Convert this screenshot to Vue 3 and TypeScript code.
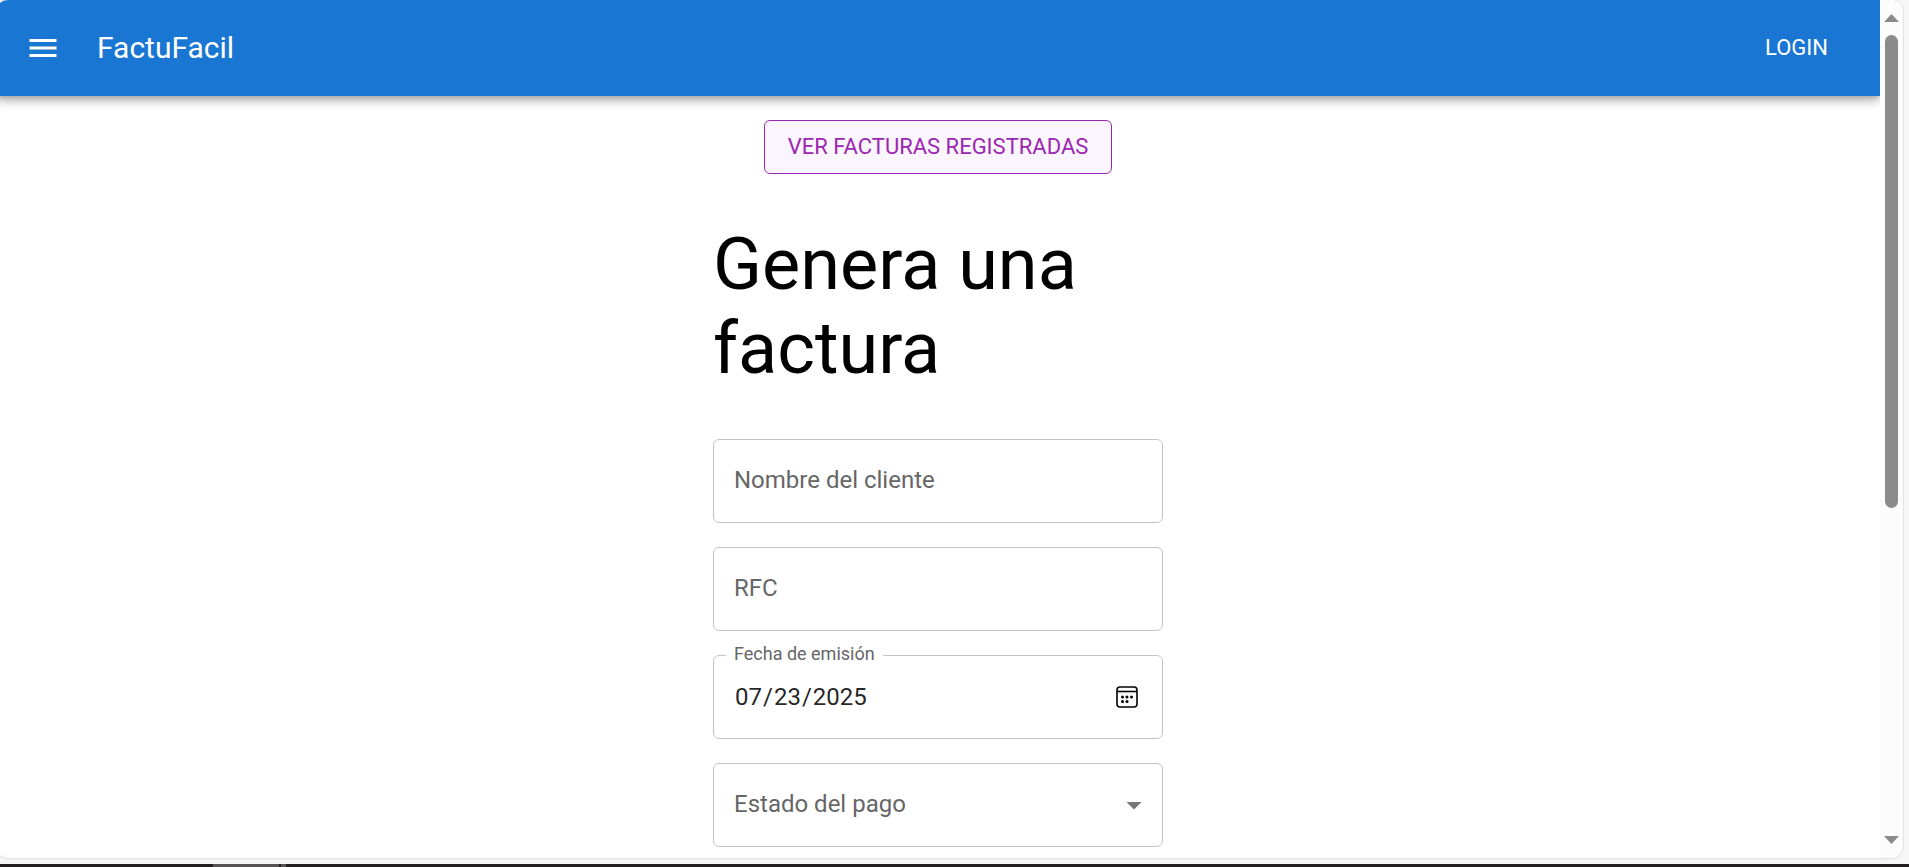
<script setup lang="ts">
import { ref } from 'vue'

const clientName = ref('')
const rfc = ref('')
const issueDate = ref('2025-07-23')
const paymentStatus = ref('')
const statuses: string[] = ['Pagado', 'Pendiente']
</script>

<template>
  <div class="desktop">
    <div class="window">
      <div class="page">
        <header class="appbar">
          <button class="menu" type="button" aria-label="Menu">
            <svg viewBox="0 0 24 24" aria-hidden="true">
              <path d="M3 18h18v-2H3zm0-5h18v-2H3zm0-7v2h18V6z" />
            </svg>
          </button>
          <div class="brand">FactuFacil</div>
          <button class="login" type="button">LOGIN</button>
        </header>

        <main class="content">
          <button class="outlined" type="button">VER FACTURAS REGISTRADAS</button>
          <form class="form" @submit.prevent>
            <h1>Genera una factura</h1>
            <div class="field">
              <input id="client" v-model="clientName" type="text" />
              <label v-show="!clientName" for="client">Nombre del cliente</label>
            </div>
            <div class="field">
              <input id="rfc" v-model="rfc" type="text" />
              <label v-show="!rfc" for="rfc">RFC</label>
            </div>
            <div class="field">
              <input id="date" v-model="issueDate" type="date" />
              <label class="floating" for="date">Fecha de emisión</label>
              <svg class="calendar" viewBox="0 0 22 22" aria-hidden="true">
                <rect x="1" y="1" width="20" height="20" rx="3" fill="none" stroke="#000" stroke-width="1.6" />
                <path d="M1 5.5h20" stroke="#000" stroke-width="1.6" />
                <circle cx="6.5" cy="11" r="1.5" />
                <circle cx="11" cy="11" r="1.5" />
                <circle cx="15.5" cy="11" r="1.5" />
                <circle cx="6.5" cy="15.5" r="1.5" />
                <circle cx="11" cy="15.5" r="1.5" />
              </svg>
            </div>
            <div class="field">
              <select id="status" v-model="paymentStatus">
                <option value=""></option>
                <option v-for="s in statuses" :key="s" :value="s">{{ s }}</option>
              </select>
              <label v-show="!paymentStatus" for="status">Estado del pago</label>
              <svg class="arrow" viewBox="0 0 24 24" aria-hidden="true"><path d="m7 10 5 5 5-5z" /></svg>
            </div>
          </form>
        </main>
      </div>

      <div class="scrollbar" aria-hidden="true">
        <svg viewBox="0 0 15 8"><path d="M7.500 0 15 8H0z" /></svg>
        <div class="track"><div class="thumb"></div></div>
        <svg viewBox="0 0 15 8"><path d="M0 0h15L7.500 8z" /></svg>
      </div>
    </div>
    <div class="taskbar" aria-hidden="true">
      <span class="task"></span>
      <span class="task small"></span>
    </div>
  </div>
</template>

<style>
body {
  margin: 0;
  background: #f6f6f6;
}
</style>

<style scoped>
.desktop {
  box-sizing: border-box;
  height: 100vh;
  display: flex;
  flex-direction: column;
  gap: 6px;
  overflow: hidden;
  background: #f6f6f6;
  font-family: Roboto, "Liberation Sans", sans-serif;
}

button,
input,
select {
  font: inherit;
  margin: 0;
}

.window {
  flex: 1;
  min-height: 0;
  display: flex;
  margin: 0 6px 0 -4px;
  overflow: hidden;
  background: #fff;
  border-radius: 12px;
  box-shadow: 0 0 0 1px #e4e4e4, 0 1px 2px #e0e0e0;
}

.page {
  flex: 1;
  min-width: 0;
  overflow: hidden;
}

.appbar {
  box-sizing: border-box;
  height: 96px;
  display: flex;
  align-items: center;
  padding: 0 36px 0 17px;
  background: #1976d2;
  color: #fff;
  box-shadow: 0 3px 6px -1px rgba(0, 0, 0, 0.2), 0 6px 8px rgba(0, 0, 0, 0.14), 0 2px 15px rgba(0, 0, 0, 0.12);
}

.menu {
  display: flex;
  padding: 12px;
  margin-right: 24px;
  border: 0;
  background: none;
  color: inherit;
}

.menu svg {
  width: 36px;
  height: 36px;
  fill: currentColor;
}

.brand {
  flex: 1;
  font-size: 30px;
  font-weight: 400;
  line-height: 48px;
}

.login {
  padding: 9px 16px;
  border: 0;
  background: none;
  color: inherit;
  font-size: 22px;
  font-weight: 400;
  line-height: 36px;
}

.content {
  display: flex;
  flex-direction: column;
  align-items: center;
  gap: 49px;
  padding: 24px 0;
}

.outlined {
  padding: 8px 23px;
  border: 1px solid #9c27b0;
  border-radius: 6px;
  background: #fbf6fd;
  color: #9c27b0;
  font-size: 22px;
  font-weight: 400;
  line-height: 36px;
}

.form {
  width: 450px;
  display: flex;
  flex-direction: column;
  gap: 24px;
}

h1 {
  margin: 0 0 24px;
  color: #000;
  font-size: 72px;
  font-weight: 400;
  line-height: 84px;
}

.field {
  display: grid;
  align-items: center;
  font-size: 24px;
}

.field > * {
  grid-area: 1 / 1;
}

.field input,
.field select {
  box-sizing: border-box;
  width: 100%;
  height: 84px;
  padding: 0 20px;
  border: 1px solid #c4c4c4;
  border-radius: 6px;
  outline: 0;
  background: #fff;
  color: rgba(0, 0, 0, 0.87);
  appearance: none;
}

.field input::-webkit-calendar-picker-indicator {
  opacity: 0;
}

.field label {
  justify-self: start;
  margin-left: 21px;
  padding-bottom: 2px;
  color: #666;
  line-height: 36px;
  pointer-events: none;
}

.field .floating {
  align-self: start;
  margin: -12px 0 0 13px;
  padding: 0 8px;
  background: #fff;
  font-size: 18px;
  line-height: 21px;
}

.field svg {
  justify-self: end;
  pointer-events: none;
}

.calendar {
  width: 22px;
  height: 22px;
  margin-right: 25px;
}

.arrow {
  width: 36px;
  height: 36px;
  margin-right: 11px;
  fill: #757575;
}

.scrollbar {
  box-sizing: border-box;
  width: 23px;
  display: flex;
  flex-direction: column;
  align-items: center;
  gap: 13px;
  padding: 14px 0;
  background: #fcfcfc;
}

.scrollbar svg {
  width: 15px;
  height: 8px;
  fill: #8b8b8b;
}

.track {
  flex: 1;
}

.thumb {
  width: 13px;
  height: 60%;
  border-radius: 7px;
  background: #8b8b8b;
}

.taskbar {
  flex: none;
  height: 3px;
  display: flex;
  gap: 2px;
  padding-left: 213px;
  background: #211f20;
}

.task {
  width: 66px;
  background: #555354;
}

.small {
  width: 5px;
}
</style>
